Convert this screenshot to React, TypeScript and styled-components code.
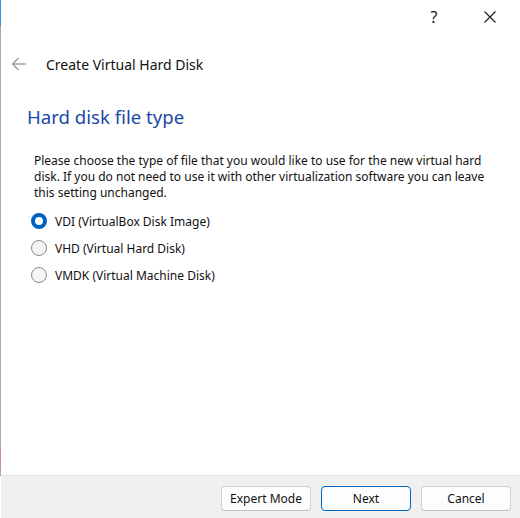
import styled, { createGlobalStyle } from 'styled-components';

const GlobalStyle = createGlobalStyle`
    html, body {
        margin: 0;
        padding: 0;
        background: #ffffff;
    }
    body {
        font-family: "Noto Sans", "Open Sans", "Liberation Sans", sans-serif;
        color: #000;
    }
`;

const Screen = styled.div`
    display: flex;
    width: 520px;
    height: 518px;
    overflow: hidden;
`;

const DesktopEdge = styled.div`
    width: 1px;
    flex-shrink: 0;
    background: linear-gradient(
        to bottom,
        #3a8fdc 0px,
        #3a8fdc 26px,
        #a8a8a8 26px,
        #a8a8a8 448px,
        #d98a8a 448px,
        #d98a8a 468px,
        #a8a8a8 468px,
        #a8a8a8 476px,
        #ffffff 476px
    );
`;

const Window = styled.div`
    flex: 1;
    min-width: 0;
    display: flex;
    flex-direction: column;
    background: #ffffff;
`;

const TitleBar = styled.div`
    height: 33px;
    display: flex;
    justify-content: flex-end;
    align-items: center;
    padding-right: 2px;
`;

const TitleButton = styled.button`
    width: 56px;
    height: 33px;
    border: none;
    background: transparent;
    display: flex;
    align-items: center;
    justify-content: center;
    padding: 0;
    color: #1a1a1a;
    font-family: "Noto Sans", sans-serif;
    font-size: 16px;
`;

const Header = styled.div`
    display: flex;
    align-items: center;
    height: 30px;
    margin-top: 16px;
    padding-left: 10px;
    gap: 19px;
`;

const HeaderTitle = styled.div`
    font-size: 14px;
    color: #111;
`;

const Content = styled.div`
    flex: 1;
    display: flex;
    flex-direction: column;
    padding: 0 20px 0 26px;
`;

const PageTitle = styled.h1`
    margin: 25px 0 0 0;
    font-weight: 400;
    font-size: 18.6px;
    line-height: 26px;
    color: #1a48a8;
`;

const Description = styled.p`
    margin: 23px 0 0 7px;
    font-size: 12px;
    line-height: 16px;
    width: 470px;
    color: #111;
`;

const OptionList = styled.div`
    display: flex;
    flex-direction: column;
    gap: 11px;
    margin: 12px 0 0 4px;
`;

const Option = styled.label`
    display: flex;
    align-items: center;
    gap: 8px;
    height: 16px;
    font-size: 12px;
    color: #111;
`;

const Radio = styled.span<{ $checked?: boolean }>`
    width: 16px;
    height: 16px;
    box-sizing: border-box;
    border-radius: 50%;
    flex-shrink: 0;
    background: ${p => (p.$checked ? '#ffffff' : '#f5f5f5')};
    border: ${p => (p.$checked ? '4.5px solid #0060c0' : '1px solid #8a8a8a')};
`;

const Footer = styled.div`
    height: 42px;
    border-top: 1px solid #e1e1e1;
    background: #f0f0f0;
    display: flex;
    justify-content: flex-end;
    align-items: center;
    gap: 10px;
    padding-right: 9px;
`;

const FooterButton = styled.button<{ $primary?: boolean }>`
    width: 90px;
    height: 25px;
    box-sizing: border-box;
    border-radius: 4px;
    background: #fdfdfd;
    border: 1px solid ${p => (p.$primary ? '#0067c0' : '#d0d0d0')};
    border-bottom-color: ${p => (p.$primary ? '#0067c0' : '#c0c0c0')};
    font-family: "Noto Sans", sans-serif;
    font-size: 12px;
    color: #111;
    padding: 0;
    margin-top: 2px;
`;

const BackArrow = () => (
    <svg width="16" height="14" viewBox="0 0 16 14" fill="none">
        <path d="M7.5 1 L1.5 7 L7.5 13 M1.5 7 H15" stroke="#a0a0a0" strokeWidth="1.4" />
    </svg>
);

const CloseIcon = () => (
    <svg width="12" height="12" viewBox="0 0 12 12" fill="none">
        <path d="M0.5 0.5 L11.5 11.5 M11.5 0.5 L0.5 11.5" stroke="#1a1a1a" strokeWidth="1.1" />
    </svg>
);

const options = [
    { label: 'VDI (VirtualBox Disk Image)', checked: true },
    { label: 'VHD (Virtual Hard Disk)', checked: false },
    { label: 'VMDK (Virtual Machine Disk)', checked: false },
];

export default function App() {
    return (
        <Screen>
            <GlobalStyle />
            <DesktopEdge />
            <Window>
                <TitleBar>
                    <TitleButton>?</TitleButton>
                    <TitleButton>
                        <CloseIcon />
                    </TitleButton>
                </TitleBar>
                <Header>
                    <BackArrow />
                    <HeaderTitle>Create Virtual Hard Disk</HeaderTitle>
                </Header>
                <Content>
                    <PageTitle>Hard disk file type</PageTitle>
                    <Description>
                        Please choose the type of file that you would like to use for the new virtual hard
                        disk. If you do not need to use it with other virtualization software you can leave
                        this setting unchanged.
                    </Description>
                    <OptionList>
                        {options.map(o => (
                            <Option key={o.label}>
                                <Radio $checked={o.checked} />
                                {o.label}
                            </Option>
                        ))}
                    </OptionList>
                </Content>
                <Footer>
                    <FooterButton>Expert Mode</FooterButton>
                    <FooterButton $primary>Next</FooterButton>
                    <FooterButton>Cancel</FooterButton>
                </Footer>
            </Window>
        </Screen>
    );
}
